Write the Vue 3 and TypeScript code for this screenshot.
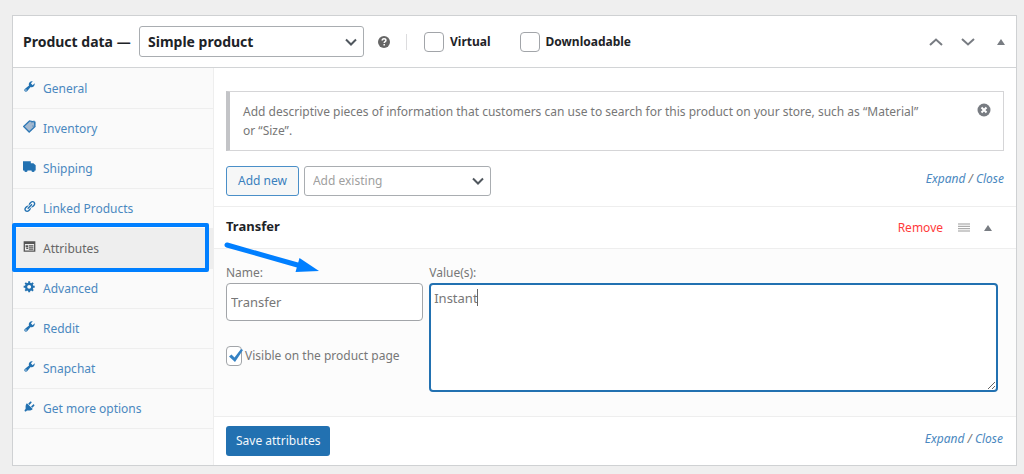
<script setup lang="ts">
import { ref } from 'vue'

type IconName = 'wrench' | 'tag' | 'truck' | 'link' | 'card' | 'gear' | 'plug'

interface Tab {
  label: string
  icon: IconName
}

const tabs: Tab[] = [
  { label: 'General', icon: 'wrench' },
  { label: 'Inventory', icon: 'tag' },
  { label: 'Shipping', icon: 'truck' },
  { label: 'Linked Products', icon: 'link' },
  { label: 'Attributes', icon: 'card' },
  { label: 'Advanced', icon: 'gear' },
  { label: 'Reddit', icon: 'wrench' },
  { label: 'Snapchat', icon: 'wrench' },
  { label: 'Get more options', icon: 'plug' },
]

const icons: Record<IconName, string> = {
  wrench:
    'M16.68 9.77c-1.34 1.34-3.3 1.67-4.95.99l-5.41 6.52c-.99.99-2.59.99-3.58 0s-.99-2.59 0-3.57l6.52-5.42c-.68-1.65-.35-3.61.99-4.95 1.28-1.28 3.12-1.62 4.72-1.06l-2.89 2.89 2.82 2.82 2.86-2.87c.53 1.58.18 3.39-1.08 4.65zM3.81 16.21c.4.39 1.04.39 1.43 0 .4-.4.4-1.04 0-1.43-.39-.4-1.03-.4-1.43 0-.39.39-.39 1.03 0 1.43z',
  tag: '',
  truck: 'M0 2h12v3h4l3.500 3v8H18a2.500 2.500 0 0 1-5 0H7a2.500 2.500 0 0 1-5 0H0z',
  link: 'M17.74 2.76c1.68 1.69 1.68 4.41 0 6.1l-1.53 1.52c-1.12 1.12-2.7 1.47-4.14 1.09l2.62-2.61.76-.77.76-.76c.84-.84.84-2.2 0-3.04-.84-.85-2.2-.85-3.04 0l-.77.76-3.38 3.38c-.37-1.44-.02-3.02 1.1-4.14l1.52-1.53c1.69-1.68 4.42-1.68 6.1 0zM8.59 13.43l5.34-5.34c.42-.42.42-1.1 0-1.52-.44-.43-1.13-.39-1.53 0l-5.33 5.34c-.42.42-.42 1.1 0 1.52.44.43 1.13.39 1.52 0zm-.76 2.29l4.14-4.15c.38 1.44.03 3.02-1.09 4.14l-1.52 1.53c-1.69 1.68-4.41 1.68-6.1 0-1.68-1.68-1.68-4.42 0-6.1l1.53-1.52c1.12-1.12 2.7-1.47 4.14-1.1l-4.14 4.15c-.85.84-.85 2.2 0 3.05.84.84 2.2.84 3.04 0z',
  card: 'M1 2h18v16H1zM3 6v10h14V6zM4 8h4v3H4zM9 8h7v2H9zM9 11h7v1.500H9zM9 13.500h7V15H9zM5 12h3v2H5z',
  gear: 'M18 12h-2.18c-.17.7-.44 1.35-.81 1.93l1.54 1.54-2.1 2.1-1.54-1.54c-.58.36-1.23.63-1.91.79V19H8v-2.18c-.68-.16-1.33-.43-1.91-.79l-1.54 1.54-2.12-2.12 1.54-1.54c-.36-.58-.63-1.23-.79-1.91H1V9.03h2.17c.16-.7.44-1.35.8-1.94L2.43 5.55l2.1-2.1 1.54 1.54c.58-.37 1.24-.64 1.93-.81V2h3v2.18c.68.16 1.33.43 1.91.79l1.54-1.54 2.12 2.12-1.54 1.54c.36.59.64 1.24.8 1.94H18V12zm-8.5 1.5c1.66 0 3-1.34 3-3s-1.34-3-3-3-3 1.34-3 3 1.34 3 3 3z',
  plug: 'M13.11 4.36L9.87 7.6 8 5.73l3.24-3.24c.35-.34 1.05-.2 1.56.32.52.51.66 1.21.31 1.55zm-8 1.77l.91-1.12 9.01 9.01-1.19.84c-.71.71-2.63 1.16-3.82 1.16H6.14L4.9 17.26c-.59.59-1.54.59-2.12 0-.59-.58-.59-1.53 0-2.12L4 13.9v-3.88c0-1.13.4-3.19 1.11-3.89zm7.26 3.97l3.24-3.24c.34-.35 1.04-.21 1.55.31.52.51.66 1.21.31 1.55l-3.24 3.25z',
}

const active = ref('Attributes')
const productType = ref('simple')
const virtual = ref(false)
const downloadable = ref(false)
const existing = ref('')
const attrName = ref('Transfer')
const attrValues = ref('Instant')
const visible = ref(true)
</script>

<template>
  <main class="panel">
    <header class="head">
      <label class="title" for="product-type">Product data —</label>
      <span class="select type">
        <select id="product-type" v-model="productType">
          <option value="simple">Simple product</option>
        </select>
        <svg class="chev" viewBox="0 0 12 8" aria-hidden="true"><path d="M1 1.500l5 5 5-5" /></svg>
      </span>
      <svg class="help" viewBox="0 0 12 12" aria-hidden="true">
        <circle cx="6" cy="6" r="6" />
        <path d="M4.200 4.600c0-2.400 3.700-2.200 3.700-.2 0 1.300-1.700 1.200-1.700 2.600M6.200 8v1.500" />
      </svg>
      <span class="rule"></span>
      <label class="flag"><input v-model="virtual" type="checkbox" />Virtual</label>
      <label class="flag"><input v-model="downloadable" type="checkbox" />Downloadable</label>
      <div class="order">
        <button type="button" aria-label="Move up">
          <svg class="arrow" viewBox="0 0 14 8" aria-hidden="true"><path d="M1 7l6-5.500L13 7" /></svg>
        </button>
        <button type="button" aria-label="Move down">
          <svg class="arrow" viewBox="0 0 14 8" aria-hidden="true"><path d="M1 1l6 5.500L13 1" /></svg>
        </button>
        <button type="button" aria-label="Toggle panel">
          <svg class="tri" viewBox="0 0 8 6" aria-hidden="true"><path d="M4 0l4 6H0z" /></svg>
        </button>
      </div>
    </header>

    <div class="body">
      <nav class="tabs">
        <a
          v-for="tab in tabs"
          :key="tab.label"
          href="#"
          class="tab"
          :class="{ active: tab.label === active }"
          @click.prevent="active = tab.label"
        >
          <svg class="icon" viewBox="0 0 20 20" aria-hidden="true">
            <g v-if="tab.icon === 'tag'" class="tag">
              <path d="M1 10l9-8.500 7.500 1.500 1 7-9 8.500z" />
              <path class="loop" d="M13 5c1-4 7-5 6 0s-3 5-5 4" />
            </g>
            <path v-else fill-rule="evenodd" :d="icons[tab.icon]" />
          </svg>
          <span>{{ tab.label }}</span>
          <i v-if="tab.label === 'Attributes'" class="marker"></i>
        </a>
      </nav>

      <section class="content">
        <div class="top">
          <div class="notice">
            <p>
              Add descriptive pieces of information that customers can use to search for this
              product on your store, such as “Material” or “Size”.
            </p>
            <button type="button" class="dismiss" aria-label="Dismiss">
              <svg viewBox="0 0 14 14" aria-hidden="true">
                <circle cx="7" cy="7" r="6.500" />
                <path d="M4.500 4.500l5 5M9.500 4.500l-5 5" />
              </svg>
            </button>
          </div>
          <div class="tools">
            <button type="button" class="add">Add new</button>
            <span class="select existing">
              <select v-model="existing" aria-label="Add existing">
                <option value="">Add existing</option>
              </select>
              <svg class="chev" viewBox="0 0 12 8" aria-hidden="true"><path d="M1 1.500l5 5 5-5" /></svg>
            </span>
            <span class="toggle"><a href="#">Expand</a> / <a href="#">Close</a></span>
          </div>
        </div>

        <div class="attr-head">
          <h3>Transfer</h3>
          <a href="#" class="remove">Remove</a>
          <svg class="grip" viewBox="0 0 12 9" aria-hidden="true">
            <path d="M0 1h12M0 3.300h12M0 5.700h12M0 8h12" />
          </svg>
          <svg class="tri" viewBox="0 0 8 6" aria-hidden="true"><path d="M4 0l4 6H0z" /></svg>
        </div>

        <div class="attr-body">
          <div class="col">
            <label for="attr-name">Name:</label>
            <input id="attr-name" v-model="attrName" class="name" type="text" />
            <label class="visible">
              <span class="box">
                <input v-model="visible" type="checkbox" />
                <svg v-if="visible" viewBox="0 0 14 14" aria-hidden="true">
                  <path d="M0 7.500l2.500-2 3 3L12 0l2 1L6 13z" />
                </svg>
              </span>
              Visible on the product page
            </label>
          </div>
          <div class="col">
            <label for="attr-values">Value(s):</label>
            <div class="values">
              <textarea id="attr-values" v-model="attrValues"></textarea>
              <i class="caret"></i>
            </div>
          </div>
          <svg class="pointer" viewBox="0 0 96 34" aria-hidden="true">
            <path class="shaft" d="M3 4l74 21" />
            <path d="M75.500 17L95 30l-23.500 1z" />
          </svg>
        </div>

        <footer class="foot">
          <button type="button" class="save">Save attributes</button>
          <span class="toggle"><a href="#">Expand</a> / <a href="#">Close</a></span>
        </footer>
      </section>
    </div>
  </main>
</template>

<style>
body {
  background: #efefef;
}
</style>

<style scoped>
* {
  box-sizing: border-box;
}
.panel {
  margin: 15px 7px 8px 12px;
  border: 1px solid #cfd1d3;
  background: #fff;
  color: #777;
  font: 12px/20px 'Noto Sans', 'Open Sans', sans-serif;
}
button,
input,
select,
textarea {
  margin: 0;
  font: inherit;
  color: inherit;
}
button {
  padding: 0;
  border: 0;
  background: none;
}
a {
  color: #4a88c0;
  text-decoration: none;
}
svg {
  display: block;
  flex: none;
  fill: none;
}
.head {
  display: flex;
  align-items: center;
  height: 52px;
  padding: 0 11px 0 10px;
  border-bottom: 1px solid #d2d4d6;
  color: #1d2327;
  font-weight: 700;
}
.title {
  width: 116px;
  font-size: 14px;
  white-space: nowrap;
}
.select {
  position: relative;
  display: block;
}
.select select {
  width: 100%;
  height: 100%;
  padding: 0 28px 0 8px;
  border: 1px solid #a9adb1;
  border-radius: 3px;
  background: #fff;
  appearance: none;
}
.select .chev {
  position: absolute;
  top: 50%;
  right: 7px;
  width: 12px;
  height: 8px;
  margin-top: -4px;
  stroke: #50575e;
  stroke-width: 2;
}
.type {
  width: 225px;
  height: 31px;
  font-size: 14px;
}
.help {
  width: 12px;
  height: 12px;
  margin-left: 14px;
  fill: #666;
}
.help path {
  fill: none;
  stroke: #fff;
  stroke-width: 1.5;
}
.rule {
  width: 1px;
  height: 16px;
  margin: 0 17px 0 16px;
  background: #dcdcde;
}
.flag {
  display: flex;
  align-items: center;
  gap: 6px;
  margin-right: 29px;
}
input[type='checkbox'] {
  width: 20px;
  height: 20px;
  border: 1px solid #a2a5a9;
  border-radius: 4px;
  background: #fff;
  appearance: none;
}
.order {
  display: flex;
  align-items: center;
  gap: 18px;
  margin-left: auto;
}
.arrow {
  width: 14px;
  height: 8px;
  stroke: #787c82;
  stroke-width: 2;
}
.order button:last-child {
  margin-left: 4px;
}
.tri {
  width: 8px;
  height: 6px;
  fill: #787c82;
}
.body {
  display: flex;
}
.tabs {
  width: 201px;
  flex: none;
  padding-top: 1px;
  border-right: 1px solid #eee;
  background: #fafafa;
}
.tab {
  position: relative;
  display: flex;
  align-items: center;
  gap: 7px;
  height: 40px;
  padding-left: 10px;
  border-bottom: 1px solid #eee;
}
.tab .icon {
  width: 13px;
  height: 13px;
  margin-bottom: 4px;
  fill: #2271b1;
}
.tag {
  fill: #a3b8cf;
  stroke: #2f78b5;
  stroke-width: 2;
}
.tag .loop {
  fill: none;
  stroke-width: 1;
}
.tab.active {
  background: #eee;
  color: #666;
}
.tab.active .icon {
  fill: #555;
}
.marker {
  position: absolute;
  inset: -6px 4px -4px -1px;
  z-index: 1;
  border: 4px solid #007fff;
  border-radius: 2px;
}
.content {
  flex: 1;
  min-width: 0;
}
.top {
  padding: 23px 12px 10px;
  border-bottom: 1px solid #eee;
}
.notice {
  display: flex;
  align-items: flex-start;
  justify-content: space-between;
  padding: 10px 12px 10px 13px;
  border: 1px solid #d5d5d7;
  border-left: 4px solid #c3c4c7;
  line-height: 19px;
}
.notice p {
  max-width: 690px;
  margin: 0;
}
.dismiss svg {
  width: 14px;
  height: 14px;
  margin-top: 1px;
  fill: #787c82;
}
.dismiss path {
  stroke: #fff;
  stroke-width: 2;
}
.tools {
  display: flex;
  align-items: center;
  gap: 5px;
  margin-top: 15px;
}
.add {
  height: 30px;
  padding: 0 11px;
  border: 1px solid #4a8fc8;
  border-radius: 3px;
  background: #f6f7f7;
  color: #3a80bd;
}
.existing {
  width: 187px;
  height: 30px;
  color: #a0a0a0;
}
.toggle {
  margin-left: auto;
  padding-bottom: 4px;
  font-style: italic;
}
.attr-head {
  display: flex;
  align-items: center;
  height: 42px;
  padding: 0 24px 0 12px;
  border-bottom: 1px solid #eee;
}
h3 {
  margin: 0 auto 0 0;
  padding-bottom: 4px;
  color: #1d2327;
  font-size: 13px;
}
.remove {
  color: #ff3b3b;
}
.grip {
  width: 12px;
  height: 9px;
  margin: 0 14px 0 15px;
  stroke: #999;
}
.attr-body {
  position: relative;
  display: grid;
  grid-template-columns: 26fr 75fr;
  gap: 6px;
  padding: 14px 18px 24px 12px;
  border-bottom: 1px solid #eee;
  background: #fcfcfc;
}
.col > label {
  display: block;
}
.name {
  display: block;
  width: 100%;
  height: 38px;
  padding: 0 4px;
  border: 1px solid #a2a5a9;
  border-radius: 4px;
  background: #fff;
  font-size: 13px;
}
.col > .visible {
  display: flex;
  align-items: center;
  gap: 3px;
  margin-top: 25px;
  white-space: nowrap;
}
.box {
  position: relative;
}
.box input {
  display: block;
  width: 16px;
}
.box svg {
  position: absolute;
  top: 3px;
  left: 3px;
  width: 14px;
  height: 14px;
  fill: #3582c4;
}
.values {
  position: relative;
}
textarea {
  display: block;
  width: 100%;
  height: 109px;
  padding: 3px;
  border: 2px solid #2271b1;
  border-radius: 4px;
  background: #fff;
  font-size: 13px;
  outline: 0;
}
.caret {
  position: absolute;
  top: 6px;
  left: 48px;
  width: 1px;
  height: 17px;
  background: #666;
}
.pointer {
  position: absolute;
  top: -8px;
  left: 10px;
  width: 96px;
  height: 34px;
  fill: #007fff;
}
.shaft {
  stroke: #007fff;
  stroke-width: 5;
  stroke-linecap: round;
}
.foot {
  display: flex;
  align-items: center;
  height: 48px;
  padding: 0 13px 0 12px;
}
.save {
  height: 30px;
  padding: 0 10px;
  border-radius: 3px;
  background: #2271b1;
  color: #f2f7fb;
}
</style>
